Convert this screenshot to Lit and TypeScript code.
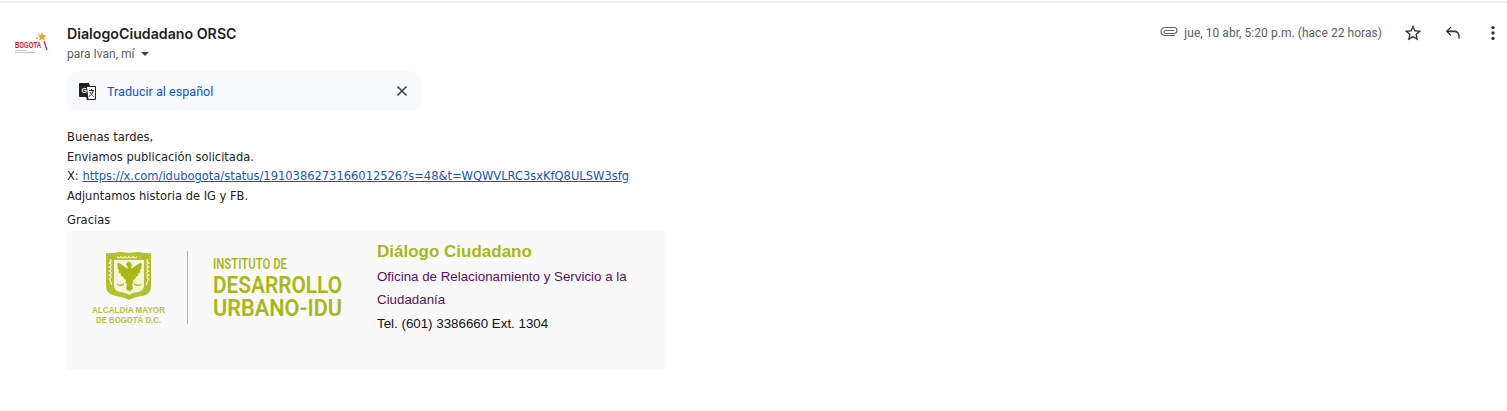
import { LitElement, html, css, svg } from "lit";
import { customElement } from "lit/decorators.js";

const G = "#a9b816";

@customElement("app-root")
export class AppRoot extends LitElement {
  static styles = css`
    :host { display: block; width: 1507px; height: 411px; background: #fff; overflow: hidden; font-family: Roboto, "Liberation Sans", sans-serif; color: #1f1f1f; }
    .rule { height: 2px; margin-top: 1px; background: #f1f1f1; }
    .msg { display: flex; padding-top: 21px; }
    .avatar { width: 67px; flex: none; padding-top: 8px; box-sizing: border-box; }
    .avatar svg { display: block; margin-left: 14px; }
    .main { flex: 1; min-width: 0; }
    .head { display: flex; justify-content: space-between; align-items: flex-start; }
    .sender { font-family: Inter, Roboto, sans-serif; font-size: 14.2px; font-weight: 600; line-height: 20px; }
    .to { display: flex; align-items: center; font-size: 12px; line-height: 16px; color: #5e5e5e; margin-top: 2px; }
    .caret { width: 0; height: 0; border: 4px solid transparent; border-top: 4px solid #444; border-bottom: 0; margin-left: 6px; }
    .meta { display: flex; align-items: center; height: 20px; margin-right: 4px; margin-top: -1px; color: #5e5e5e; font-size: 12px; }
    .clip { margin-right: 6px; margin-top: -3px; }
    .date { margin-right: 21px; letter-spacing: .05px; }
    .meta svg.act { margin-right: 20px; }
    .meta svg.last { margin-right: 0; }
    .trans { display: flex; align-items: center; width: 355px; height: 40px; margin-top: 9px; box-sizing: border-box; padding-left: 12px; padding-right: 11px; background: #f8fafd; border-radius: 12px; color: #0b57d0; font-size: 12.6px; }
    .trans .label { flex: 1; margin-left: 11px; }
    .body { font-family: "DejaVu Sans", sans-serif; font-stretch: condensed; font-size: 12.77px; line-height: 19.6px; color: #222; margin-top: 16px; }
    .body a { color: #1155cc; }
    .thanks { margin-top: 5px; }
    .sig { display: flex; width: 600px; height: 138px; margin-top: 1px; background: #f9f9f9; }
    .sig svg { flex: none; display: block; }
    .info { padding: 10px 0 0 10px; font-family: "Liberation Sans", sans-serif; font-size: 13.33px; line-height: 23.5px; width: 270px; }
    .t { font-size: 17px; font-weight: 700; color: ${css([G] as any)}; line-height: 22px; }
    .o { color: #5b0f5e; margin-top: 2px; }
    .p { color: #111; }
  `;

  logo() {
    const T = (x: number, y: number, s: number, w: number, t: string, weight = 500, fam = "Roboto", fill = G) => svg`<text x=${x} y=${y} font-size=${s} font-weight=${weight} font-family=${fam} fill=${fill} textLength=${w} lengthAdjust="spacingAndGlyphs">${t}</text>`;
    return html`<svg width="300" height="138" viewBox="0 0 300 138">
      <path d="M39 22c6 1 10-1 15-1 3 0 5 1 8 1s5-1 8-1c5 0 9 2 14 1v33c0 6-3 9-9 10-6 1-10 2-13 4-3-2-7-3-13-4-6-1-10-4-10-10z" fill="#b4c12f"/>
      <path d="M47 29h30v25c0 4-2 6-6 7-4 1-7 1-9 3-2-2-5-2-9-3-4-1-6-3-6-7z" fill="#f4f6dc"/>
      <path d="M62 31c1.500 0 2.500 1 2.500 2.500l1 1-1 .5v3c2-2 5-4 9.500-6.500l1 3-1 .5.500 3-1.500.5.500 3-2 .5-.500 3-2 .5-1 2.500-2 1 .5 3-1.500 1 1 5-3.500 2.500-3.500-2.500 1-5-1.500-1 .5-3-2-1-1-2.500-2-.5-.5-3-2-.5.500-3-1.500-.5.500-3-1-.5 1-3c4.500 2.500 7.500 4.500 9.500 6.500v-3l-1.500-1c0-2 1.500-3.500 3-3.500z" fill=${G}/>
      <path d="M50 53c2 3 5 1 7 0M74 53c-2 3-5 1-7 0" fill="none" stroke=${G} stroke-width="1.300"/>
      <path d="M43 28c1.500 2 1.500 3-.5 4 2 1 2 3 0 4 2 1 2 3 0 4 2 1 2 3 0 4 2 1 2 3 0 4 1 2 2 4 2 6M81 28c-1.500 2-1.500 3 .5 4-2 1-2 3 0 4-2 1-2 3 0 4-2 1-2 3 0 4-2 1-2 3 0 4-1 2-2 4-2 6M50 25.500c2 2 3 2 4 0 1 2 3 2 4 0 1 2 3 2 4 0 1 2 3 2 4 0 1 2 3 2 4 0" fill="none" stroke="#f4f6dc" stroke-width="1.200"/>
      ${T(25, 82, 9.500, 73, "ALCALDÍA MAYOR", 700, "Liberation Sans", "#b7c33c")}
      ${T(29, 92, 9.500, 65, "DE BOGOTÁ D.C.", 700, "Liberation Sans", "#b7c33c")}
      <rect x="120" y="20" width="1" height="73" fill="#b7c33c"/>
      ${T(146, 37.5, 14, 74, "INSTITUTO DE", 600)}
      ${T(146, 61.5, 24.5, 129, "DESARROLLO", 600)}
      ${T(146, 85, 24.5, 129, "URBANO-IDU", 600)}
    </svg>`;
  }

  render() {
    return html`
      <div class="rule"></div>
      <div class="msg">
        <div class="avatar">
          <svg width="44" height="24" viewBox="0 0 44 24">
            <path d="M28 0l1.300 3 3 .4-2.200 2.200.6 3-2.700-1.500-2.700 1.500.6-3-2.200-2.200 3-.4z" fill="#f5a623"/>
            <circle cx="23" cy="6" r=".9" fill="#f5a623"/><circle cx="25" cy="2" r=".7" fill="#f5a623"/>
            <text x="1" y="16" font-size="8.500" font-weight="700" font-family="Liberation Sans" fill="#d8121f" textLength="26" lengthAdjust="spacingAndGlyphs">BOGOTA</text>
            <path d="M30 9l3 9" stroke="#d8121f" stroke-width="1.100" fill="none"/>
            <rect x="1" y="18" width="12" height="1" fill="#c4c4c4"/><rect x="1" y="20" width="20" height="1" fill="#c4c4c4"/>
          </svg>
        </div>
        <div class="main">
          <div class="head">
            <div>
              <div class="sender">DialogoCiudadano ORSC</div>
              <div class="to">para Ivan, mí<span class="caret"></span></div>
            </div>
            <div class="meta">
              <svg class="clip" width="18" height="12" viewBox="0 0 18 12" fill="none" stroke="#666" stroke-width="1.200"><path d="M15 9.500H5a4 4 0 0 1 0-8h9a3 3 0 0 1 0 6H5.500a1.500 1.500 0 0 1 0-3H14"/></svg>
              <span class="date">jue, 10 abr, 5:20 p.m. (hace 22 horas)</span>
              <svg class="act" width="20" height="20" viewBox="0 0 24 24" fill="#333"><path d="M22 9.240l-7.190-.62L12 2 9.190 8.630 2 9.240l5.460 4.730L5.820 21 12 17.270 18.180 21l-1.630-7.030L22 9.240zM12 15.400l-3.760 2.270 1-4.280-3.320-2.880 4.380-.38L12 6.100l1.710 4.040 4.380.38-3.320 2.880 1 4.280L12 15.400z"/></svg>
              <svg class="act" width="20" height="20" viewBox="0 0 24 24" fill="#333"><path d="M20 19h-1.600v-3.500c0-2.500-1.900-4.500-4.400-4.500H6.600l3.500 3.500L9 15.600 3.400 10 9 4.400l1.100 1.100-3.500 3.500H14c3.500 0 6 2.900 6 6.500z"/></svg>
              <svg class="act last" width="20" height="20" viewBox="0 0 24 24" fill="#333"><circle cx="12" cy="5.500" r="2"/><circle cx="12" cy="12" r="2"/><circle cx="12" cy="18.500" r="2"/></svg>
            </div>
          </div>
          <div class="trans">
            <svg width="17" height="17" viewBox="0 0 17 17">
              <path d="M1 0h9l1 3h5a1 1 0 0 1 1 1v12a1 1 0 0 1-1 1H8l-1-3H1a1 1 0 0 1-1-1V1a1 1 0 0 1 1-1z" fill="#222"/>
              <path d="M8 4h8v12H9.500z" fill="#fff"/>
              <text x="2.500" y="9.500" font-size="7" font-weight="700" font-family="Liberation Sans" fill="#fff">G</text>
              <path d="M10 7.500h5M12.500 6v1.500M14 8c-.8 3-2.500 4.500-4 5.500M11 9c.8 2 2.200 3.500 3.800 4.500" stroke="#222" stroke-width="1" fill="none"/>
            </svg>
            <span class="label">Traducir al español</span>
            <svg width="18" height="18" viewBox="0 0 18 18" stroke="#444" stroke-width="1.700" fill="none"><path d="M4.500 4.500l9 9M13.500 4.500l-9 9"/></svg>
          </div>
          <div class="body">
            <div>Buenas tardes,</div>
            <div>Enviamos publicación solicitada.</div>
            <div>X: <a href="#">https://x.com/idubogota/status/1910386273166012526?s=48&amp;t=WQWVLRC3sxKfQ8ULSW3sfg</a></div>
            <div>Adjuntamos historia de IG y FB.</div>
            <div class="thanks">Gracias</div>
          </div>
          <div class="sig">
            ${this.logo()}
            <div class="info">
              <div class="t">Diálogo Ciudadano</div>
              <div class="o">Oficina de Relacionamiento y Servicio a la Ciudadanía</div>
              <div class="p">Tel. (601) 3386660 Ext. 1304</div>
            </div>
          </div>
        </div>
      </div>
    `;
  }
}
